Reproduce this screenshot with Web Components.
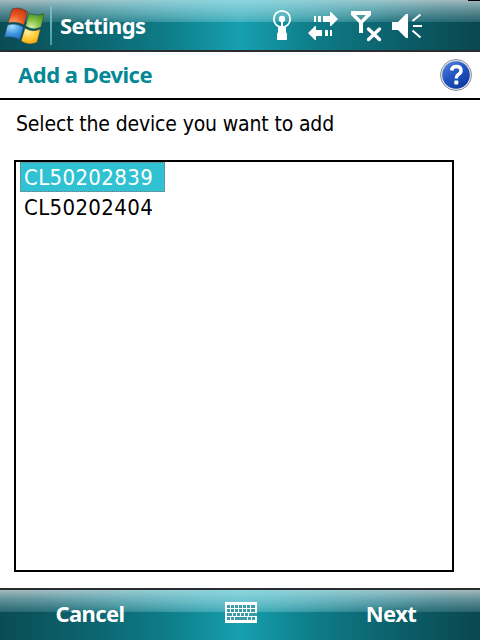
<!DOCTYPE html>
<html lang="en"><head><meta charset="utf-8"><title>Settings</title>
<style>html,body{margin:0;height:100%;overflow:hidden;background:#fff}</style></head>
<body><device-screen></device-screen>
<script>
const define = (name, html) => customElements.define(name, class extends HTMLElement {
  constructor() {
    super();
    const t = document.createElement('template');
    t.innerHTML = html;
    this.attachShadow({mode: 'open'}).append(t.content.cloneNode(true));
  }
});
define('glass-bar', `<style>
:host{display:flex;align-items:center;box-sizing:border-box;color:#fff;
background:
radial-gradient(ellipse 210px 32px at 50% 0,rgba(125,218,228,.65),rgba(110,200,212,0)) 0 0/100% 22px no-repeat,
linear-gradient(180deg,rgba(200,213,217,.8) 0,rgba(175,205,212,.58) 8px,rgba(140,190,200,.22) 22px,transparent 22px),
linear-gradient(90deg,#0a4c55 0,#0c626c 17%,#0e7b87 34%,#16a0af 50%,#0e7b87 66%,#0b5f6a 83%,#0a474f 100%)}
</style><slot></slot>`);
define('windows-flag', `<style>:host{display:block;width:44px;height:44px}svg{display:block}</style>
<svg width="44" height="44" viewBox="0 0 44 44"><defs>
<radialGradient id="r" cx=".3" cy=".9" r="1"><stop offset="0" stop-color="#ffb070"/><stop offset=".45" stop-color="#ee5a22"/><stop offset="1" stop-color="#bd3210"/></radialGradient>
<radialGradient id="g" cx=".3" cy=".9" r="1"><stop offset="0" stop-color="#d5efaa"/><stop offset=".5" stop-color="#80bd3d"/><stop offset="1" stop-color="#418920"/></radialGradient>
<radialGradient id="b" cx=".4" cy=".15" r="1"><stop offset="0" stop-color="#a5dcff"/><stop offset=".5" stop-color="#3f94dd"/><stop offset="1" stop-color="#1659a8"/></radialGradient>
<radialGradient id="y" cx=".35" cy=".2" r="1"><stop offset="0" stop-color="#fff0a0"/><stop offset=".55" stop-color="#ffc62a"/><stop offset="1" stop-color="#df8910"/></radialGradient></defs>
<g stroke="#153e47" stroke-width=".5" transform="translate(0 .6)">
<path fill="url(#r)" d="M12 8.500Q19 5.500 27.500 11L24 24.500Q16 20 8 22.500Z"/>
<path fill="url(#g)" d="M29 12.500Q37 16.500 44.800 12.500L41 26.500Q33 30.500 25.500 25.500Z"/>
<path fill="url(#b)" d="M7.500 24.500Q15 21.500 23.500 26.500L20 39.500Q12 35 4 37Z"/>
<path fill="url(#y)" d="M25 27.500Q32 32 40.500 28.500L37 42Q28 45.500 21 40.500Z"/></g></svg>`);
define('status-icons', `<style>:host{display:block;width:160px;height:50px}svg{display:block}</style>
<svg width="160" height="50" viewBox="268 0 160 50" fill="#fff">
<circle cx="282" cy="19" r="8.200" fill="none" stroke="#fff" stroke-width="1.800"/>
<circle cx="282" cy="19" r="3.200"/><path d="M281 20h2v7h3v5l1 2v6h-10v-6l1-2v-5h3z"/>
<path d="M314 16h2v6h-2zM318 16h3v6h-3zM323 16h7v-4h1l7 7-7 7h-1v-4h-7z"/>
<path d="M332 30h-2v6h2zM328 30h-3v6h3zM322 30h-6v-4h-1l-7 7 7 7h1v-4h6z"/>
<path fill-rule="evenodd" d="M351 11h20v4l-8 8v10h-4V23l-8-8zM356 15l5 5 5-5z"/>
<path d="M368.500 29l11 10.500M379.500 29l-11 10.500" fill="none" stroke="#fff" stroke-width="3.400" stroke-linecap="round"/>
<path d="M392 22h6l8-8h2v24h-2l-8-8h-6z"/><path d="M412.500 21l8-6.500M413 26h9M412.500 30.500l8 7" fill="none" stroke="#fff" stroke-width="2"/>
</svg>`);
define('help-badge', `<style>:host{display:block;width:34px;height:34px}svg{display:block}</style>
<svg width="34" height="34" viewBox="0 0 34 34"><defs><linearGradient id="h" x2=".7" y2="1"><stop offset="0" stop-color="#5b86e0"/><stop offset=".5" stop-color="#2456c4"/><stop offset="1" stop-color="#0e3b9f"/></linearGradient></defs>
<circle cx="17" cy="17" r="15.500" fill="#e4e7ee" stroke="#8b909a"/><circle cx="17" cy="17" r="13.800" fill="url(#h)"/>
<path d="M12.600 12.500Q13 8.500 17.200 8.500Q22 8.500 22 12.500Q22 15 19 16.700Q17.300 17.700 17.300 20.500" fill="none" stroke="#fff" stroke-width="3.500"/><rect x="15.300" y="22.500" width="4" height="4" rx="1" fill="#fff"/></svg>`);
define('key-board', `<style>:host{display:block;width:32px;height:21px}svg{display:block}</style>
<svg width="32" height="21" shape-rendering="crispEdges"><rect width="32" height="21" rx="1" fill="#fff"/>
<g stroke="#3b9ba7" stroke-width="3" fill="none"><path stroke-dasharray="3 1" d="M2 4.500h23M2 8.500h23M2 16.500h7"/><path d="M26 4.500h4M26 8.500h4M2 12.500h5m1 0h3m1 0h3m1 0h3m1 0h3m1 0h8M10 16.500h12m1 0h3m1 0h3"/></g></svg>`);
define('list-item', `<style>
:host{display:block;box-sizing:border-box;width:145px;height:30px;padding-left:3px;border:1px solid transparent;line-height:29px;white-space:nowrap;letter-spacing:.35px}
:host([selected]){background:#30c2d2;color:#fff;border:1px dotted #896f78}
</style><slot></slot>`);
define('device-list', `<style>
:host{display:block;box-sizing:border-box;width:440px;height:412px;margin:21px 0 0 14px;padding-left:4px;border:2px solid #000}
</style><slot></slot>`);
define('device-screen', `<style>
:host{display:flex;flex-direction:column;width:480px;height:640px;background:#fff;color:#000;font:22px "DejaVu Sans Condensed","DejaVu Sans",sans-serif;font-stretch:condensed}
b{white-space:nowrap;font-family:"Noto Sans","Open Sans",sans-serif;font-stretch:normal;font-weight:700;line-height:30px;letter-spacing:-.58px}
.top{height:52px;border-bottom:2px solid #292d30;align-items:flex-start}
.flag{width:44px}.sep{width:2px;height:39px;margin:6px 0 0 6px;background:linear-gradient(#7ac0c8,#3f9fab)}
.set{width:208px;margin:10px 0 0 8px}
.notch{width:12px;height:1px;margin-left:auto;background:#000}
.head{display:flex;justify-content:space-between;align-items:center;box-sizing:border-box;height:48px;padding:0 7px 0 18px;border-bottom:2px solid #000;color:#058896}
.head b{letter-spacing:-.5px;padding-bottom:2px}
.msg{height:30px;margin:9px 0 0 16px;line-height:30px;font-size:21px;letter-spacing:-.15px;white-space:nowrap}
.main{flex:1}
.bottom{height:52px;border-top:2px solid #292d30;display:grid;grid-template-columns:180px 122px 178px;justify-items:center;align-items:start}
.bottom b{margin-top:8px}.bottom key-board{margin-top:12px}
</style>
<glass-bar class="top"><windows-flag class="flag"></windows-flag><div class="sep"></div><b class="set">Settings</b><status-icons></status-icons><div class="notch"></div></glass-bar>
<div class="head"><b>Add a Device</b><help-badge></help-badge></div>
<div class="main"><div class="msg">Select the device you want to add</div>
<device-list><list-item selected>CL50202839</list-item><list-item>CL50202404</list-item></device-list></div>
<glass-bar class="bottom"><b>Cancel</b><key-board></key-board><b>Next</b></glass-bar>`);
</script></body></html>
